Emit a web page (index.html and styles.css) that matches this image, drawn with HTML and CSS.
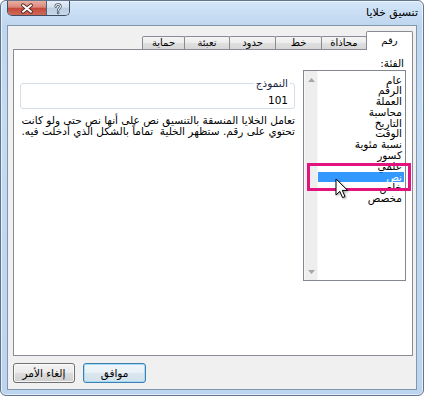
FILE: index.html
```html
<!DOCTYPE html>
<html lang="ar" dir="rtl">
<head>
<meta charset="utf-8">
<title>تنسيق خلايا</title>
<link rel="stylesheet" href="styles.css">
</head>
<body>
<div class="window">
  <div class="titlebar">
    <span class="title">تنسيق خلايا</span>
    <div class="caption-btns">
      <div class="cap help">
        <svg width="24" height="15" viewBox="0 0 24 15"><g transform="translate(12 7.5)" fill="none" stroke-linecap="round" stroke-linejoin="round"><path d="M-2.4 -2.2 C-2.4 -5 2.6 -5 2.6 -2.2 C2.6 -0.2 0.1 0 0.1 2" stroke="#3b4a5e" stroke-width="2.8"/><path d="M0.1 4.6 L0.1 4.8" stroke="#3b4a5e" stroke-width="2.8"/><path d="M-2.4 -2.2 C-2.4 -5 2.6 -5 2.6 -2.2 C2.6 -0.2 0.1 0 0.1 2" stroke="#fff" stroke-width="1.2"/><path d="M0.1 4.6 L0.1 4.8" stroke="#fff" stroke-width="1.2"/></g></svg>
      </div>
      <div class="cap close">
        <svg width="38" height="15" viewBox="0 0 38 15"><g transform="translate(19 7.5)" stroke-linecap="round"><path d="M-4 -3.2 L4 3.2 M-4 3.2 L4 -3.2" stroke="#5a2a24" stroke-width="3.8"/><path d="M-4 -3.2 L4 3.2 M-4 3.2 L4 -3.2" stroke="#fff" stroke-width="2"/></g></svg>
      </div>
    </div>
  </div>

  <div class="client">
    <div class="tabs">
      <div class="tab active w47">رقم</div>
      <div class="tab w46">محاذاة</div>
      <div class="tab w47">خط</div>
      <div class="tab w47">حدود</div>
      <div class="tab w46">تعبئة</div>
      <div class="tab w43">حماية</div>
    </div>

    <div class="panel">
      <div class="cat-col">
        <div class="cat-label">الفئة:</div>
        <div class="listbox">
          <ul class="items">
            <li>عام</li>
            <li>الرقم</li>
            <li>العملة</li>
            <li>محاسبة</li>
            <li>التاريخ</li>
            <li>الوقت</li>
            <li>نسبة مئوية</li>
            <li>كسور</li>
            <li>علمي</li>
            <li class="selected">نص</li>
            <li>خاص</li>
            <li>مخصص</li>
          </ul>
          <div class="scrollbar">
            <div class="sb-btn"><svg width="7" height="4" viewBox="0 0 7 4"><path d="M0 4 L3.5 0 L7 4 Z" fill="#a6a6a6"/></svg></div>
            <div class="sb-track"></div>
            <div class="sb-btn"><svg width="7" height="4" viewBox="0 0 7 4"><path d="M0 0 L3.5 4 L7 0 Z" fill="#a6a6a6"/></svg></div>
          </div>
        </div>
      </div>

      <div class="detail-col">
        <fieldset class="sample">
          <legend>النموذج</legend>
          <div class="sample-val">101</div>
        </fieldset>
        <p class="desc">تعامل الخلايا المنسقة بالتنسيق نص على أنها نص حتى ولو كانت<br>تحتوي على رقم. ستظهر الخلية&nbsp; تماماً بالشكل الذي أدخلت فيه.</p>
      </div>
    </div>

    <div class="buttons">
      <button class="btn ok">موافق</button>
      <button class="btn cancel">إلغاء الأمر</button>
    </div>
  </div>

  <div class="highlight-box"></div>
  <svg class="cursor" width="16" height="24" viewBox="0 0 16 24"><path d="M1 1 L1 17 L4.8 13.3 L7.6 19.6 L10 18.6 L7.3 12.4 L12.6 12.4 Z" fill="#fff" stroke="#000" stroke-width="1" stroke-linejoin="miter"/></svg>
</div>
</body>
</html>
```

FILE: styles.css
```css
* { box-sizing: border-box; }

html, body {
  margin: 0;
  padding: 0;
  background: #ffffff;
}

body {
  width: 424px;
  height: 396px;
  overflow: hidden;
  font-family: "DejaVu Sans", sans-serif;
  font-size: 11px;
  color: #000;
}

.window {
  position: relative;
  width: 424px;
  height: 396px;
  border: 1px solid #61758e;
  border-radius: 6px;
  background: linear-gradient(#d4e6f8 0, #bfd6ef 24px, #c5dbf2 120px, #bcd4ee 100%);
  box-shadow: inset 0 0 0 1px rgba(255, 255, 255, 0.6);
  display: flex;
  flex-direction: column;
}

/* ---------- title bar ---------- */
.titlebar {
  height: 24px;
  display: flex;
  align-items: flex-start;
  padding: 0 5px 0 6px;
  flex: none;
}

.title {
  line-height: 24px;
  font-size: 11px;
  color: #000;
}

.caption-btns {
  margin-right: auto;
  display: flex;
  height: 15px;
  border: 1px solid #3f4d60;
  border-top: none;
  border-radius: 0 0 5px 5px;
  overflow: hidden;
}

.cap {
  height: 14px;
  display: flex;
  align-items: center;
  justify-content: center;
}

.cap svg { display: block; }

.help {
  width: 23px;
  background: linear-gradient(#e6eef8 0, #d3e0ef 45%, #bccde2 50%, #c9d9ec 100%);
  border-left: 1px solid #50617a;
}

.close {
  width: 38px;
  background: linear-gradient(#e8aea2 0, #d9877a 45%, #c4493a 50%, #cf6a58 100%);
}

/* ---------- client area ---------- */
.client {
  flex: 1;
  margin: 0 6px 5px 6px;
  border: 1px solid #8396ae;
  background: #f0f0f0;
  display: flex;
  flex-direction: column;
  padding: 5px 3px 6px 5px;
}

.tabs {
  height: 18px;
  display: flex;
  align-items: flex-end;
  flex: none;
}

.tab {
  height: 13px;
  margin-left: -1px;
  border: 1px solid #898c95;
  border-bottom: none;
  border-radius: 2px 2px 0 0;
  background: linear-gradient(#f4f4f4 0, #ececec 50%, #e0e0e0 50%, #d7d7d7 100%);
  font-size: 10px;
  line-height: 11px;
  text-align: center;
  white-space: nowrap;
}

.tab.active {
  position: relative;
  z-index: 1;
  height: 19px;
  margin-bottom: -1px;
  background: #ffffff;
  line-height: 17px;
}

.w47 { width: 47px; }
.w46 { width: 46px; }
.w43 { width: 43px; }

.panel {
  height: 307px;
  flex: none;
  background: #ffffff;
  border: 1px solid #898c95;
  display: flex;
  gap: 8px;
  padding: 7px 6px 0 6px;
}

/* ---------- category list ---------- */
.cat-col {
  width: 103px;
  flex: none;
}

.cat-label {
  height: 13px;
  line-height: 13px;
  font-size: 10.5px;
  padding-right: 2px;
}

.listbox {
  height: 211px;
  border: 1px solid #828790;
  display: flex;
}

.items {
  flex: 1;
  list-style: none;
  margin: 0;
  padding: 3.5px 0 0 0;
}

.items li {
  height: 10.8px;
  line-height: 10.8px;
  font-size: 10.5px;
  padding-right: 2px;
  margin-right: 1px;
  white-space: nowrap;
}

.items li.selected {
  background: #3399ff;
  color: #ffffff;
}

.scrollbar {
  width: 14px;
  flex: none;
  display: flex;
  flex-direction: column;
  background: #eeeeee;
  border-left: 1px solid #f7f7f7;
  border-right: 1px solid #f7f7f7;
}

.sb-btn {
  height: 17px;
  display: flex;
  align-items: center;
  justify-content: center;
}

.sb-btn svg { display: block; }

.sb-track { flex: 1; }

/* ---------- sample + description ---------- */
.detail-col {
  flex: 1;
  padding-top: 20px;
}

.sample {
  margin: 0;
  padding: 0 4px 2px 4px;
  min-width: 0;
  border: 1px solid #d5dfe5;
  border-radius: 3px;
}

.sample legend {
  padding: 0 2px;
  font-size: 10.5px;
  line-height: 12px;
  color: #1b2a46;
}

.sample-val {
  margin-top: 5px;
  height: 12px;
  line-height: 12px;
  padding-right: 2px;
  font-size: 10.5px;
}

.desc {
  margin: 6px 0 0 0;
  font-size: 10.5px;
  line-height: 11px;
  white-space: nowrap;
}

/* ---------- buttons ---------- */
.buttons {
  margin-top: auto;
  display: flex;
  justify-content: flex-end;
  gap: 8px;
}

.btn {
  height: 20px;
  padding: 0;
  font-family: "DejaVu Sans", sans-serif;
  font-size: 10.5px;
  color: #000;
  border: 1px solid #707070;
  border-radius: 3px;
  background: linear-gradient(#f3f3f3 0, #ebebeb 50%, #dddddd 50%, #d0d0d0 100%);
  box-shadow: inset 0 0 0 1px rgba(255, 255, 255, 0.75);
}

.btn.ok {
  width: 63px;
  border-color: #3c7fb1;
  background: linear-gradient(#f1f6fa 0, #e9f1f7 50%, #dbe7f0 50%, #d2e1ec 100%);
  box-shadow: inset 0 0 0 1px #a4dbf6;
}

.btn.cancel {
  width: 62px;
}

/* ---------- overlays ---------- */
.highlight-box {
  position: absolute;
  left: 306px;
  top: 162px;
  width: 104px;
  height: 28px;
  border: 3px solid #e2137f;
}

.cursor {
  position: absolute;
  left: 334px;
  top: 177px;
  filter: drop-shadow(1px 1px 1px rgba(0, 0, 0, 0.35));
}
```
